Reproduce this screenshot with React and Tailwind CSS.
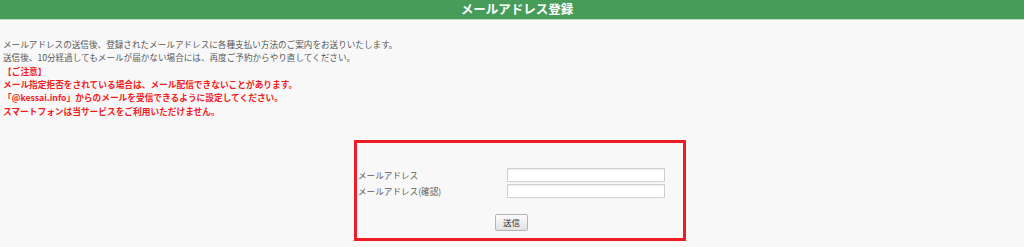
export default function App() {
  const font = { fontFamily: '"Noto Sans CJK JP", "Noto Sans", sans-serif' };
  return (
    <div className="w-[1024px] h-[247px] bg-[#f8f8f8] overflow-hidden" style={font}>
      <div className="h-[19px] bg-[#479c59] flex items-center justify-center">
        <span className="text-white font-bold text-[12.5px] leading-none pl-[10px]">メールアドレス登録</span>
      </div>
      <div className="h-px bg-[#b9dcc0]"></div>
      <div className="pt-[18px] pl-[3px] text-[8.6px] leading-[13px] text-[#5a5a5a]">
        <p>メールアドレスの送信後、登録されたメールアドレスに各種支払い方法のご案内をお送りいたします。</p>
        <p>送信後、10分経過してもメールが届かない場合には、再度ご予約からやり直してください。</p>
      </div>
      <div className="pt-[0.5px] pl-[3px] text-[8.7px] leading-[13.4px] text-[#f51b1b] font-bold">
        <p>【ご注意】</p>
        <p>メール指定拒否をされている場合は、メール配信できないことがあります。</p>
        <p>「@kessai.info」からのメールを受信できるように設定してください。</p>
        <p>スマートフォンは当サービスをご利用いただけません。</p>
      </div>
      <div className="mt-[22px] ml-[354px] w-[332px] h-[101px] border-[3px] border-[#ee1c25] pt-[25px]">
        <div className="flex items-center h-[14px]">
          <span className="w-[150px] pl-[1px] text-[8.6px] text-[#5a5a5a] leading-none">メールアドレス</span>
          <input className="w-[158px] h-[14px] bg-white border border-[#cfcfcf] shadow-[inset_0_1px_1px_rgba(0,0,0,0.08)] outline-none" />
        </div>
        <div className="flex items-center h-[14px] mt-[2px]">
          <span className="w-[150px] pl-[1px] text-[8.6px] text-[#5a5a5a] leading-none">メールアドレス(確認)</span>
          <input className="w-[158px] h-[14px] bg-white border border-[#cfcfcf] shadow-[inset_0_1px_1px_rgba(0,0,0,0.08)] outline-none" />
        </div>
        <div className="mt-[16px] ml-[138px]">
          <button className="w-[33px] h-[17px] rounded-[2px] border border-[#b4b4b4] bg-gradient-to-b from-[#fbfbfb] to-[#e2e2e2] text-[8.5px] text-[#333] leading-none flex items-center justify-center">送信</button>
        </div>
      </div>
    </div>
  );
}
